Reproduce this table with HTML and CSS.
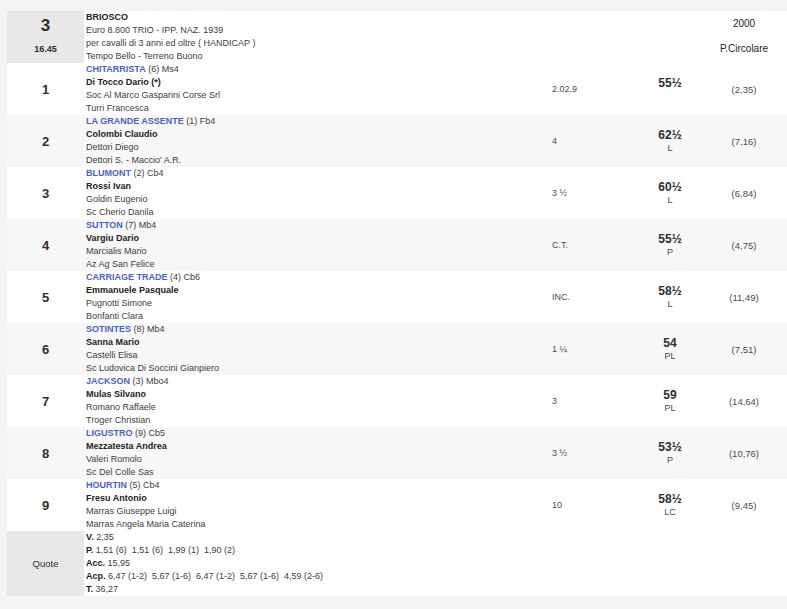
FILE: index.html
```html
<!DOCTYPE html>
<html lang="it">
<head>
<meta charset="utf-8">
<link rel="stylesheet" href="styles.css">
</head>
<body>
<div class="page">
<table class="race">
  <colgroup>
    <col class="c-num"><col class="c-info"><col class="c-dist"><col class="c-wt"><col class="c-odds">
  </colgroup>
  <tr class="head">
    <td class="num head-num"><div class="top big">3</div><div class="bottom small">16.45</div></td>
    <td class="info">
      <div class="line strong">BRIOSCO</div>
      <div class="line">Euro 8.800 TRIO - IPP. NAZ. 1939</div>
      <div class="line">per cavalli di 3 anni ed oltre ( HANDICAP )</div>
      <div class="line">Tempo Bello - Terreno Buono</div>
    </td>
    <td></td><td></td>
    <td class="odds"><div class="top dark">2000</div><div class="bottom dark">P.Circolare</div></td>
  </tr>
  <tr class="odd">
    <td class="num">1</td>
    <td class="info"><div class="line"><b class="horse">CHITARRISTA</b> (6) Ms4</div><div class="line strong">Di Tocco Dario (*)</div><div class="line">Soc Al Marco Gasparini Corse Srl</div><div class="line">Turri Francesca</div></td>
    <td class="dist">2.02.9</td>
    <td class="wt"><div class="kg">55½</div><div class="eq">&nbsp;</div></td>
    <td class="odds">(2,35)</td>
  </tr>
  <tr class="even">
    <td class="num">2</td>
    <td class="info"><div class="line"><b class="horse">LA GRANDE ASSENTE</b> (1) Fb4</div><div class="line strong">Colombi Claudio</div><div class="line">Dettori Diego</div><div class="line">Dettori S. - Maccio' A.R.</div></td>
    <td class="dist">4</td>
    <td class="wt"><div class="kg">62½</div><div class="eq">L</div></td>
    <td class="odds">(7,16)</td>
  </tr>
  <tr class="odd">
    <td class="num">3</td>
    <td class="info"><div class="line"><b class="horse">BLUMONT</b> (2) Cb4</div><div class="line strong">Rossi Ivan</div><div class="line">Goldin Eugenio</div><div class="line">Sc Cherio Danila</div></td>
    <td class="dist">3 ½</td>
    <td class="wt"><div class="kg">60½</div><div class="eq">L</div></td>
    <td class="odds">(6,84)</td>
  </tr>
  <tr class="even">
    <td class="num">4</td>
    <td class="info"><div class="line"><b class="horse">SUTTON</b> (7) Mb4</div><div class="line strong">Vargiu Dario</div><div class="line">Marcialis Mario</div><div class="line">Az Ag San Felice</div></td>
    <td class="dist">C.T.</td>
    <td class="wt"><div class="kg">55½</div><div class="eq">P</div></td>
    <td class="odds">(4,75)</td>
  </tr>
  <tr class="odd">
    <td class="num">5</td>
    <td class="info"><div class="line"><b class="horse">CARRIAGE TRADE</b> (4) Cb6</div><div class="line strong">Emmanuele Pasquale</div><div class="line">Pugnotti Simone</div><div class="line">Bonfanti Clara</div></td>
    <td class="dist">INC.</td>
    <td class="wt"><div class="kg">58½</div><div class="eq">L</div></td>
    <td class="odds">(11,49)</td>
  </tr>
  <tr class="even">
    <td class="num">6</td>
    <td class="info"><div class="line"><b class="horse">SOTINTES</b> (8) Mb4</div><div class="line strong">Sanna Mario</div><div class="line">Castelli Elisa</div><div class="line">Sc Ludovica Di Soccini Gianpiero</div></td>
    <td class="dist">1 ¼</td>
    <td class="wt"><div class="kg">54</div><div class="eq">PL</div></td>
    <td class="odds">(7,51)</td>
  </tr>
  <tr class="odd">
    <td class="num">7</td>
    <td class="info"><div class="line"><b class="horse">JACKSON</b> (3) Mbo4</div><div class="line strong">Mulas Silvano</div><div class="line">Romano Raffaele</div><div class="line">Troger Christian</div></td>
    <td class="dist">3</td>
    <td class="wt"><div class="kg">59</div><div class="eq">PL</div></td>
    <td class="odds">(14,64)</td>
  </tr>
  <tr class="even">
    <td class="num">8</td>
    <td class="info"><div class="line"><b class="horse">LIGUSTRO</b> (9) Cb5</div><div class="line strong">Mezzatesta Andrea</div><div class="line">Valeri Romolo</div><div class="line">Sc Del Colle Sas</div></td>
    <td class="dist">3 ½</td>
    <td class="wt"><div class="kg">53½</div><div class="eq">P</div></td>
    <td class="odds">(10,76)</td>
  </tr>
  <tr class="odd">
    <td class="num">9</td>
    <td class="info"><div class="line"><b class="horse">HOURTIN</b> (5) Cb4</div><div class="line strong">Fresu Antonio</div><div class="line">Marras Giuseppe Luigi</div><div class="line">Marras Angela Maria Caterina</div></td>
    <td class="dist">10</td>
    <td class="wt"><div class="kg">58½</div><div class="eq">LC</div></td>
    <td class="odds">(9,45)</td>
  </tr>
  <tr class="quote">
    <td class="num head-num quote-label">Quote</td>
    <td class="info" colspan="4">
      <div class="line"><b class="dark">V.</b> 2,35</div>
      <div class="line"><b class="dark">P.</b> 1,51 (6)&nbsp; 1,51 (6)&nbsp; 1,99 (1)&nbsp; 1,90 (2)</div>
      <div class="line"><b class="dark">Acc.</b> 15,95</div>
      <div class="line"><b class="dark">Acp.</b> 6,47 (1-2)&nbsp; 5,67 (1-6)&nbsp; 6,47 (1-2)&nbsp; 5,67 (1-6)&nbsp; 4,59 (2-6)</div>
      <div class="line"><b class="dark">T.</b> 36,27</div>
    </td>
  </tr>
</table>
</div>
</body>
</html>
```

FILE: styles.css
```css
html, body {
  margin: 0;
  padding: 0;
  background: #f4f4f4;
  overflow: hidden;
}
body {
  font-family: "Liberation Sans", Arial, sans-serif;
  font-size: 9px;
  color: #3d3d3d;
}
.page {
  padding: 11px 0 0 7px;
}
.race {
  border-collapse: collapse;
  width: 790px;
  table-layout: fixed;
  border-bottom: 6px solid #f4f4f4;
  box-shadow: 0 1px 0 #e0e0e0;
}
.c-num { width: 77px; }
.c-info { width: 463px; }
.c-dist { width: 82px; }
.c-wt { width: 82px; }
.c-odds { width: 86px; }
td {
  padding: 0;
  vertical-align: middle;
  line-height: 13px;
}
tr.head, tr.odd, tr.quote { background: #fff; }
tr.even { background: #f7f7f7; }
tr.head td, tr.odd td, tr.even td { height: 52px; }
.head-num { background: #e8e8e8; }
.num {
  text-align: center;
  font-size: 13px;
  font-weight: bold;
  color: #2e2e2e;
}
.top { height: 22px; line-height: 26px; }
.bottom { height: 30px; line-height: 32px; }
.num .top { line-height: 29px; }
.big { font-size: 17px; color: #2e2e2e; }
.small { font-size: 9px; color: #2e2e2e; }
.info { padding-left: 2px; }
.line { height: 13px; white-space: nowrap; }
.strong { font-weight: bold; color: #222; }
.dark { color: #222; }
.horse { color: #4763c6; }
.dist { padding-left: 5px; color: #4a4a4a; }
.wt { text-align: center; }
.kg { font-size: 12px; font-weight: bold; color: #2e2e2e; line-height: 14px; }
.eq { line-height: 13px; color: #4a4a4a; }
.odds { text-align: center; color: #4a4a4a; padding-right: 20px; font-size: 9.5px; }
.odds .dark { font-size: 10px; }
.quote-label { font-size: 9.5px; font-weight: normal; color: #2e2e2e; }
.quote td { height: 65px; }
```
